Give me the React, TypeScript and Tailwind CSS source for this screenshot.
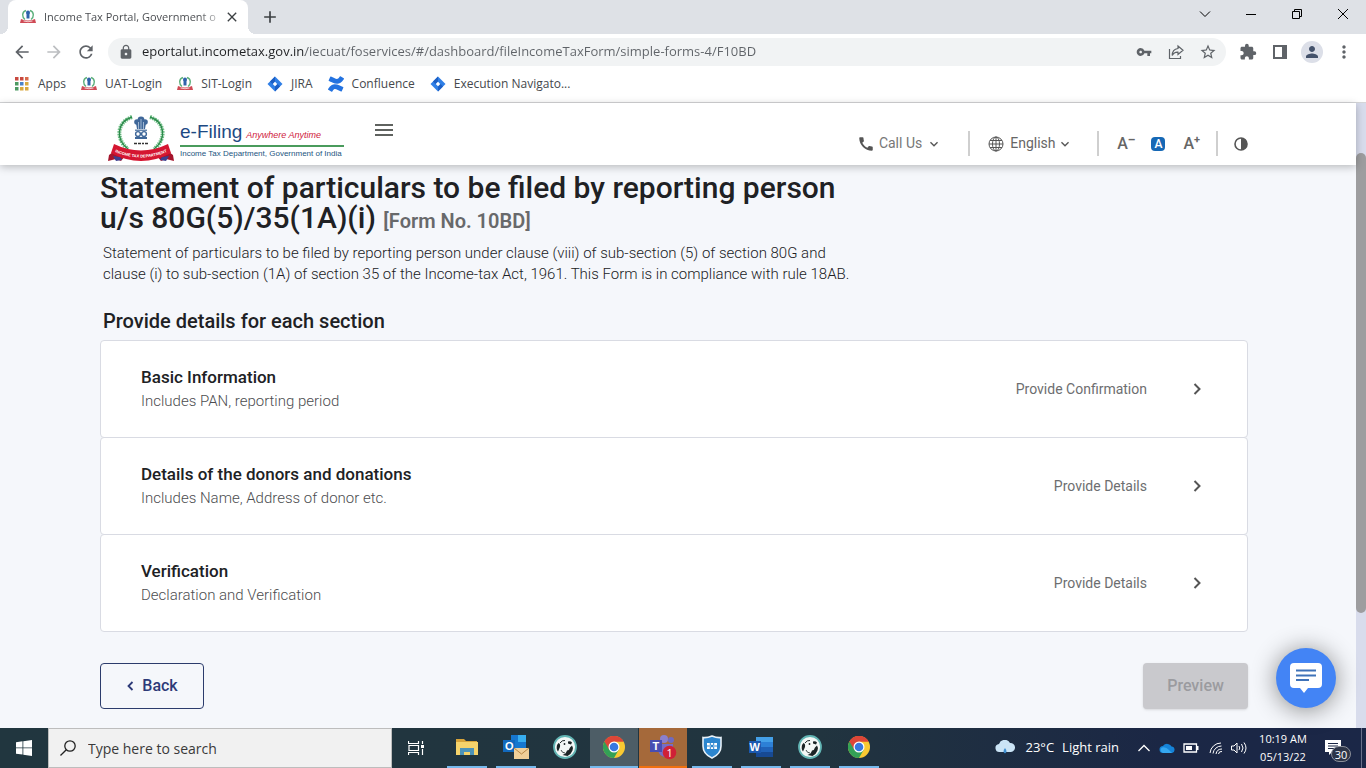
import React from "react";
import {
  MdArrowBack,
  MdArrowForward,
  MdCall,
  MdClose,
  MdExtension,
  MdKeyboardArrowDown,
  MdLock,
  MdMoreVert,
  MdPerson,
  MdRefresh,
  MdStarBorder,
  MdVpnKey,
  MdAdd,
} from "react-icons/md";
import { SiConfluence } from "react-icons/si";

const sections = [
  { title: "Basic Information", note: "Includes PAN, reporting period", status: "Provide Confirmation" },
  { title: "Details of the donors and donations", note: "Includes Name, Address of donor etc.", status: "Provide Details" },
  { title: "Verification", note: "Declaration and Verification", status: "Provide Details" },
];

function Emblem({ className }: { className: string }) {
  return (
    <svg viewBox="0 0 66 48" className={className} aria-hidden="true">
      <path d="M24 2C9 7 7 24 20 34M42 2c15 5 17 22 4 32" fill="none" stroke="#6fbf86" strokeWidth="4" strokeDasharray="1.6 .9" />
      <path d="M24 2C9 7 7 24 20 34M42 2c15 5 17 22 4 32" fill="none" stroke="#2c8a4b" strokeWidth="1.4" />
      <g fill="#3f6799">
        <circle cx="33" cy="5" r="3.4" />
        <circle cx="29" cy="7" r="2.8" />
        <circle cx="37" cy="7" r="2.8" />
        <path d="M28 8h10l-1 6h-8zM27 22h12v2H27z" />
      </g>
      <path d="M30.500 7v7M33 4v10M35.500 7v7" stroke="#c9d9ea" strokeWidth=".7" />
      <path d="M27 15.200h12" stroke="#3f6799" strokeWidth="1.200" />
      <circle cx="30" cy="19" r="2.400" fill="none" stroke="#3f6799" strokeWidth="1.400" />
      <circle cx="36" cy="19" r="2.400" fill="none" stroke="#3f6799" strokeWidth="1.400" />
      <path d="M26 28.500h3m1 0h3m1 0h2m1 0h3" stroke="#333" strokeWidth="1.500" />
      <path d="M1 40l8-6 8 7-4 5-5-2-8 2zM65 40l-8-6-8 7 4 5 5-2 8 2z" fill="#a5142c" />
      <path d="M5 41l7 1 2 3-6 1zM61 41l-7 1-2 3 6 1z" fill="#3b3f8f" />
      <path d="M6 29q27 13 54 0l3 9q-30 16-60 0z" fill="#d51631" />
      <path id="ribbon" d="M6 36.500q27 12 54 0" fill="none" />
      <text fontSize="4" fontWeight="700" fill="#fff" fontFamily="Liberation Sans, sans-serif">
        <textPath href="#ribbon" startOffset="50%" textAnchor="middle">INCOME TAX DEPARTMENT</textPath>
      </text>
    </svg>
  );
}

function MiniEmblem() {
  return (
    <svg viewBox="0 0 16 16" className="size-4 shrink-0" aria-hidden="true">
      <path d="M6 1.500C1.500 3 2 8.500 5 10.500M10 1.500c4.500 1.500 4 7 1 9" fill="none" stroke="#5db07c" strokeWidth="1.400" />
      <circle cx="8" cy="3.500" r="2" fill="#2f62ab" />
      <path d="M6.500 4h3v5.500h-3z" fill="#2f62ab" />
      <path d="M1 10q7 3 14 0l1 4H0z" fill="#cf4a55" />
      <path d="M3.500 12q4.500 1.500 9 0" fill="none" stroke="#f3c9cc" />
    </svg>
  );
}

function JiraIcon() {
  return (
    <svg viewBox="0 0 16 16" className="size-4 shrink-0" aria-hidden="true">
      <path d="M8 .5L15.500 8 8 15.500.5 8z" fill="#2f7fe6" />
      <path d="M8 .5v5L5.500 8 3 5.500z" fill="#1c5fc4" />
      <path d="M8 15.500v-5L10.500 8l2.500 2.500z" fill="#1c5fc4" />
      <path d="M8 5.800L10.200 8 8 10.200 5.800 8z" fill="#fff" />
    </svg>
  );
}

function AppsIcon() {
  const colors = ["#c8493f", "#c8493f", "#d8694a", "#4d9a62", "#4a82c9", "#d9a83e", "#4d9a62", "#d9a83e", "#d9a83e"];
  return (
    <svg viewBox="0 0 16 16" className="size-4 shrink-0" aria-hidden="true">
      {colors.map((c, i) => (
        <rect key={i} x={1 + (i % 3) * 5} y={1 + Math.floor(i / 3) * 5} width="3.500" height="3.500" fill={c} />
      ))}
    </svg>
  );
}

const bookmarks = [
  { label: "Apps", icon: <AppsIcon /> },
  { label: "UAT-Login", icon: <MiniEmblem /> },
  { label: "SIT-Login", icon: <MiniEmblem /> },
  { label: "JIRA", icon: <JiraIcon /> },
  { label: "Confluence", icon: <SiConfluence className="size-4 text-[#2372e0]" /> },
  { label: "Execution Navigato...", icon: <JiraIcon /> },
];

function Browser() {
  return (
    <div className="bg-white font-['Open_Sans','Noto_Sans',sans-serif]">
      <div className="flex h-[34px] items-start bg-[#dee1e6] pl-2">
        <div className="relative flex h-[34px] w-60 items-center rounded-t-lg bg-white pl-3 pr-2">
          <span className="absolute -left-2 bottom-0 size-2 bg-[radial-gradient(circle_at_0_0,#dee1e6_8px,#fff_8px)]" />
          <span className="absolute -right-2 bottom-0 size-2 bg-[radial-gradient(circle_at_100%_0,#dee1e6_8px,#fff_8px)]" />
          <MiniEmblem />
          <span className="ml-2 w-44 whitespace-nowrap bg-[linear-gradient(90deg,#45484c_88%,#fff_104%)] bg-clip-text text-[11px] text-transparent">
            Income Tax Portal, Government o
          </span>
          <button aria-label="Close tab" className="ml-1 text-[#3c4043]">
            <MdClose className="size-4" />
          </button>
        </div>
        <button aria-label="New tab" className="ml-3 flex h-[34px] items-center text-[#3c4043]">
          <MdAdd className="size-5" />
        </button>
        <div className="ml-auto flex h-7 text-black">
          <button aria-label="Search tabs" className="flex w-[46px] items-center justify-center">
            <svg viewBox="0 0 12 12" className="size-3" fill="none" stroke="currentColor"><path d="M1 3.500l5 5 5-5" /></svg>
          </button>
          <button aria-label="Minimize" className="flex w-[46px] items-center justify-center">
            <svg viewBox="0 0 10 10" className="size-2.5" stroke="currentColor"><path d="M0 5.500h10" /></svg>
          </button>
          <button aria-label="Restore" className="flex w-[46px] items-center justify-center">
            <svg viewBox="0 0 10 10" className="size-2.5" fill="none" stroke="currentColor"><path d="M.5 2.500h7v7h-7zM2.500 2.500v-2h7v7h-2" /></svg>
          </button>
          <button aria-label="Close" className="flex w-[46px] items-center justify-center">
            <svg viewBox="0 0 10 10" className="size-2.5" stroke="currentColor"><path d="M0 0l10 10M10 0L0 10" /></svg>
          </button>
        </div>
      </div>

      <div className="flex h-9 items-center px-1.5 text-[#5f6368]">
        <button aria-label="Back" className="flex w-8 justify-center"><MdArrowBack className="size-5" /></button>
        <button aria-label="Forward" className="flex w-8 justify-center text-[#bcbec1]"><MdArrowForward className="size-5" /></button>
        <button aria-label="Reload" className="flex w-8 justify-center"><MdRefresh className="size-5" /></button>
        <div className="ml-1.5 flex h-7 flex-1 items-center rounded-full bg-[#f1f3f4] pl-2.5 pr-0.5">
          <MdLock className="size-4" />
          <input
            aria-label="Address"
            readOnly
            value="eportalut.incometax.gov.in/iecuat/foservices/#/dashboard/fileIncomeTaxForm/simple-forms-4/F10BD"
            className="ml-2 min-w-0 flex-1 bg-[linear-gradient(90deg,#202124_163px,#5f6368_163px)] bg-clip-text text-[13px] text-transparent outline-none"
          />
          <button aria-label="Passwords" className="flex w-8 justify-center"><MdVpnKey className="size-4" /></button>
          <button aria-label="Share" className="flex w-8 justify-center">
            <svg viewBox="0 0 16 16" className="size-4" fill="none" stroke="currentColor" strokeWidth="1.200">
              <path d="M1.500 5v9.500h11V12M10 2l5 4.200-5 4.200V8.200C7.500 8 5.500 9 4.200 11.500 4.200 7.500 6.500 5 10 4.500z" />
            </svg>
          </button>
          <button aria-label="Bookmark" className="flex w-8 justify-center"><MdStarBorder className="size-[18px]" /></button>
        </div>
        <button aria-label="Extensions" className="ml-1.5 flex w-8 justify-center"><MdExtension className="size-[18px]" /></button>
        <button aria-label="Side panel" className="flex w-8 justify-center">
          <svg viewBox="0 0 14 14" className="size-3.5"><path d="M1 1h12v12H1z" fill="none" stroke="currentColor" strokeWidth="2" /><path d="M9 0h5v14H9z" fill="currentColor" /></svg>
        </button>
        <button aria-label="Profile" className="flex w-8 justify-center">
          <span className="flex size-[22px] items-center justify-center rounded-full bg-[#dcdfe8] text-[#44526b]"><MdPerson className="size-[18px]" /></span>
        </button>
        <button aria-label="Menu" className="flex w-8 justify-center"><MdMoreVert className="size-5" /></button>
      </div>

      <div className="flex h-[33px] items-center gap-[15px] border-b border-[#d5d6d8] pb-1 pl-3.5 text-[12px] text-[#45484c]">
        {bookmarks.map((b) => (
          <a key={b.label} href="#" className="flex items-center gap-2 whitespace-nowrap">
            {b.icon}
            {b.label}
          </a>
        ))}
      </div>
    </div>
  );
}

function Divider() {
  return <span className="h-[25px] w-0.5 bg-[#cfcfcf]" />;
}

function SiteHeader() {
  return (
    <header className="relative z-10 flex h-[62px] items-start bg-white pl-[108px] pr-[108px] shadow-[0_2px_8px_rgba(0,0,0,0.25)]">
      <a href="#" aria-label="e-Filing home" className="flex pt-3">
        <Emblem className="h-12 w-[66px]" />
        <span className="ml-1.5 block w-[164px] pt-1 font-['Liberation_Sans',sans-serif]">
          <span className="flex items-baseline gap-1 whitespace-nowrap border-b-2 border-[#4a9b5c]">
            <span className="text-[19px] leading-[26px] text-[#1d4983]">e-Filing</span>
            <span className="text-[9px] italic leading-4 text-[#cf2140]">Anywhere Anytime</span>
          </span>
          <span className="block whitespace-nowrap text-[8px] leading-[14px] text-[#1d5580]">
            Income Tax Department, Government of India
          </span>
        </span>
      </a>
      <button aria-label="Open navigation" className="ml-[31px] pt-[21px] text-[#5f625f]">
        <svg viewBox="0 0 18 12" className="h-3 w-[18px]" stroke="currentColor" strokeWidth="2"><path d="M0 1h18M0 6h18M0 11h18" /></svg>
      </button>

      <div className="ml-auto mt-7 flex h-[25px] items-center text-[#666]">
        <button className="flex items-center text-[14px] text-[#777]">
          <MdCall className="mr-1 size-[18px] text-[#555]" />
          Call Us
          <MdKeyboardArrowDown className="ml-1 size-4 text-[#555]" />
        </button>
        <span className="w-[26px]" />
        <Divider />
        <label className="ml-[18px] flex items-center text-[14px]">
          <svg viewBox="0 0 16 16" className="size-4" fill="none" stroke="#555">
            <circle cx="8" cy="8" r="7" />
            <ellipse cx="8" cy="8" rx="3.500" ry="7" />
            <path d="M8 1v14M1 8h14M2 4.500h12M2 11.500h12" />
          </svg>
          <select aria-label="Language" className="ml-1.5 appearance-none bg-transparent">
            <option>English</option>
          </select>
          <MdKeyboardArrowDown className="ml-px size-4 text-[#555]" />
        </label>
        <span className="w-6" />
        <Divider />
        <button aria-label="Decrease font size" className="ml-[18px] flex items-start text-[16px] font-medium leading-5">
          A<span className="text-[12px] font-bold leading-3">–</span>
        </button>
        <button aria-label="Default font size" className="ml-4 flex size-3.5 items-center justify-center rounded-sm bg-[#1668b5] text-[12px] font-medium leading-none text-white">A</button>
        <button aria-label="Increase font size" className="ml-[18px] flex items-start text-[16px] font-medium leading-5">
          A<span className="text-[11px] font-bold leading-3">+</span>
        </button>
        <span className="w-4" />
        <Divider />
        <button aria-label="Contrast" className="ml-4">
          <svg viewBox="0 0 14 14" className="size-3.5"><circle cx="7" cy="7" r="6" fill="none" stroke="#555" strokeWidth="1.600" /><path d="M7 1a6 6 0 010 12z" fill="#555" /></svg>
        </button>
      </div>
    </header>
  );
}

function FormPage() {
  return (
    <main className="pl-[100px] pr-[108px] pt-2">
      <h1 className="max-w-[750px] text-[30px] font-medium leading-[30px] text-[#202124]">
        Statement of particulars to be filed by reporting person u/s 80G(5)/35(1A)(i){" "}
        <span className="text-[20px] font-semibold leading-5 text-[#68696b]">[Form No. 10BD]</span>
      </h1>
      <p className="mt-2.5 max-w-[800px] pl-[3px] text-[15px] font-light leading-[21px] text-[#202124]">
        Statement of particulars to be filed by reporting person under clause (viii) of sub-section (5) of section 80G and
        <br />
        clause (i) to sub-section (1A) of section 35 of the Income-tax Act, 1961. This Form is in compliance with rule 18AB.
      </p>
      <h2 className="mt-6 pl-[3px] text-[20px] font-medium leading-6 text-[#202124]">Provide details for each section</h2>

      <div className="mt-[7px]">
        {sections.map((s) => (
          <button
            key={s.title}
            className="-mb-px flex w-full items-center rounded border border-[#d9dbe3] bg-white py-6 pl-10 pr-10 text-left"
          >
            <span className="flex-1">
              <span className="block text-[17px] font-medium leading-6 text-[#202124]">{s.title}</span>
              <span className="block text-[15px] font-light leading-6 text-[#4c4d50]">{s.note}</span>
            </span>
            <span className="text-[14px] leading-5 text-[#6d6e70]">{s.status}</span>
            <svg viewBox="0 0 12 12" className="ml-11 mr-1 size-3" fill="none" stroke="#555" strokeWidth="2"><path d="M3.500 1L8.500 6l-5 5" /></svg>
          </button>
        ))}
      </div>

      <div className="mt-8 flex justify-between">
        <button className="flex h-[46px] w-[104px] items-center justify-center gap-2 rounded border border-[#2c3c6c] text-[16px] font-medium text-[#2d3a78]">
          <svg viewBox="0 0 8 10" className="h-2.5 w-2" fill="none" stroke="currentColor" strokeWidth="1.800"><path d="M6.500 1L2.500 5l4 4" /></svg>
          Back
        </button>
        <button disabled className="h-[46px] w-[105px] rounded bg-[#c9c9cd] text-[16px] font-medium text-[#9b9b9f] shadow">
          Preview
        </button>
      </div>
    </main>
  );
}

function ChromeIcon() {
  return (
    <svg viewBox="0 0 24 24" className="size-[22px]" aria-hidden="true">
      <circle cx="12" cy="12" r="12" fill="#f9c932" />
      <path d="M12 12L1.600 6A12 12 0 0122.400 6H12z" fill="#dd4638" />
      <path d="M12 12L1.600 6A12 12 0 0012 24l5.200-9z" fill="#33a156" />
      <path d="M12 6h10.400A12 12 0 001.600 6l5.200 9z" fill="#dd4638" />
      <circle cx="12" cy="12" r="6" fill="#fff" />
      <circle cx="12" cy="12" r="4.700" fill="#3878e0" />
    </svg>
  );
}

function DogIcon() {
  return (
    <svg viewBox="0 0 24 24" className="size-6" aria-hidden="true">
      <circle cx="12" cy="12" r="11" fill="#f4f8f7" stroke="#62b5b4" strokeWidth="1.800" />
      <path d="M5.500 8q2 .5 1.500 4l-2 4.500Q3 14 4 10z" fill="#1c2426" />
      <path d="M15 6.500q2.500-1 4 1l-1 2-3-1z" fill="#1c2426" />
      <path d="M19 10.500q1.500 2 .5 5-1.500 4-5 5.500l-5-1q3.500-1 4.500-4.500 2.500-.500 3-3z" fill="#1c2426" />
      <path d="M7 8q2-3 5-2.500" fill="none" stroke="#1c2426" strokeWidth="1" />
      <circle cx="11.500" cy="9" r=".9" fill="#1c2426" />
      <path d="M8 15q1 3 4 3" fill="none" stroke="#1c2426" strokeWidth=".8" />
    </svg>
  );
}

function FolderIcon() {
  return (
    <svg viewBox="0 0 24 22" className="h-[22px] w-6" aria-hidden="true">
      <path d="M1 3h8l2 2h11v4H1z" fill="#d8a43a" />
      <path d="M1 6h22v13H1z" fill="#f6d36b" />
      <path d="M5 19v-7h14v7h-4v-3H9v3z" fill="#4d93b8" />
    </svg>
  );
}

function OutlookIcon() {
  return (
    <svg viewBox="0 0 28 26" className="h-[26px] w-7" aria-hidden="true">
      <path d="M9 1h15v15H9z" fill="#1677cf" />
      <path d="M16 1h8v7h-8z" fill="#37aef0" />
      <path d="M1 6h12v12H1z" fill="#1269bd" />
      <text x="3" y="16" fontSize="11" fontWeight="700" fill="#fff" fontFamily="Liberation Sans, sans-serif">O</text>
      <path d="M12 14h15v11H12z" fill="#f0cf98" />
      <path d="M12 14l7.500 6 7.500-6" fill="none" stroke="#b98846" />
    </svg>
  );
}

function TeamsIcon() {
  return (
    <svg viewBox="0 0 28 26" className="h-[26px] w-7" aria-hidden="true">
      <circle cx="15" cy="5" r="4" fill="#8a80cf" />
      <circle cx="22" cy="6" r="3" fill="#6f6ac0" />
      <path d="M9 10h15v7q-2 6-8 6-6-1-7-7z" fill="#756dc6" />
      <path d="M1 6h12v12H1z" fill="#474db2" />
      <text x="3.500" y="16" fontSize="11" fontWeight="700" fill="#fff" fontFamily="Liberation Sans, sans-serif">T</text>
      <circle cx="20.500" cy="18.500" r="6.800" fill="#cf2036" />
      <text x="17.500" y="22.500" fontSize="11" fill="#fff" fontFamily="Open Sans, sans-serif">1</text>
    </svg>
  );
}

function ShieldIcon() {
  return (
    <svg viewBox="0 0 20 24" className="h-6 w-5" aria-hidden="true">
      <path d="M10 1q5 2 9 1.500V11q0 8-9 12Q1 19 1 11V2.500Q5 3 10 1z" fill="#2c86cf" stroke="#e8f1f8" strokeWidth="1.600" />
      <path d="M5 8h10v6H5z" fill="#fff" />
      <path d="M5 11h10M8.300 8v2M11.700 8v2M8.300 12v2M11.700 12v2" fill="none" stroke="#2c86cf" strokeWidth="1" />
      <path d="M8.800 9.800h2.400v2.400H8.800z" fill="#2c86cf" />
    </svg>
  );
}

function WordIcon() {
  return (
    <svg viewBox="0 0 26 22" className="h-[22px] w-[26px]" aria-hidden="true">
      <path d="M8 1h17v5H8z" fill="#44a0e8" />
      <path d="M8 6h17v5H8z" fill="#2d80d6" />
      <path d="M8 11h17v5H8z" fill="#2062b8" />
      <path d="M8 16h17v5H8z" fill="#174a94" />
      <path d="M1 5h12v12H1z" fill="#1b59b0" />
      <text x="1.500" y="15" fontSize="11" fontWeight="700" fill="#fff" fontFamily="Liberation Sans, sans-serif">W</text>
    </svg>
  );
}

const tasks = [
  { name: "File Explorer", icon: <FolderIcon />, className: "border-[#76b9ed]" },
  { name: "Outlook", icon: <OutlookIcon />, className: "border-[#76b9ed]" },
  { name: "DBeaver", icon: <DogIcon />, className: "border-transparent" },
  { name: "Chrome", icon: <ChromeIcon />, className: "border-[#76b9ed]", tile: "bg-[#4d5d66]" },
  { name: "Teams", icon: <TeamsIcon />, className: "border-[#f0700f]", tile: "bg-[#a5693a]" },
  { name: "FortiClient", icon: <ShieldIcon />, className: "border-[#76b9ed]" },
  { name: "Word", icon: <WordIcon />, className: "border-[#76b9ed]" },
  { name: "DBeaver 2", icon: <DogIcon />, className: "border-[#76b9ed]" },
  { name: "Chrome 2", icon: <ChromeIcon />, className: "border-[#76b9ed]" },
];

function Taskbar() {
  return (
    <footer className="flex h-10 items-stretch bg-[linear-gradient(90deg,#21363f_0%,#21343f_60%,#1b2745_85%,#1b2747_100%)] font-['Open_Sans','Noto_Sans',sans-serif] text-white">
      <button aria-label="Start" className="flex w-12 items-center justify-center">
        <svg viewBox="0 0 16 16" className="size-4" fill="#fff"><path d="M0 2.200L6.500 1.300v6.200H0zM7.300 1.200L16 0v7.500H7.300zM0 8.300h6.500v6.300L0 13.700zM7.300 8.300H16V16l-8.700-1.200z" /></svg>
      </button>
      <label className="flex w-[344px] items-center border border-[#bdbdbd] bg-[#f1f1f1] pl-[11px]">
        <svg viewBox="0 0 16 16" className="size-4" fill="none" stroke="#222" strokeWidth="1.300"><circle cx="10" cy="6" r="5.200" /><path d="M6.300 9.700L.5 15.500" /></svg>
        <input
          aria-label="Search"
          placeholder="Type here to search"
          className="ml-3 min-w-0 flex-1 bg-transparent text-[14px] outline-none placeholder:text-[#3a3a3a]"
        />
      </label>
      <button aria-label="Task view" className="flex w-12 items-center justify-center">
        <svg viewBox="0 0 16 16" className="size-4" fill="none" stroke="#fff" strokeWidth="1.200"><path d="M.5 1v2.500h10V1M.5 15v-2.500h10V15M1 5.500h9.500v5H1zM14.500 1v3M14.500 9v6" /><path d="M13 5h3v3h-3z" fill="#fff" stroke="none" /></svg>
      </button>
      <div className="ml-[3px] flex gap-px">
        {tasks.map((t) => (
          <button key={t.name} aria-label={t.name} className={`flex w-12 flex-col items-center ${t.tile ?? ""}`}>
            <span className={`flex h-10 items-center justify-center border-b-2 ${t.className} ${t.tile ? "w-12" : "w-10"}`}>{t.icon}</span>
          </button>
        ))}
      </div>
      <div className="ml-auto flex items-center text-[13px]">
        <button className="flex items-center whitespace-nowrap">
          <svg viewBox="0 0 20 16" className="mr-2.5 h-4 w-5"><path d="M5 12a4 4 0 01-1-8 6 6 0 0111-1 4.500 4.500 0 011 9z" fill="#cbe4f6" /><path d="M10 8q3 4 0 5.500Q7 12 10 8z" fill="#3f8fd0" /></svg>
          <span className="mr-2">23°C</span>
          <span>Light rain</span>
        </button>
        <button aria-label="Show hidden icons" className="ml-[18px]">
          <svg viewBox="0 0 14 10" className="h-2.5 w-3.5" fill="none" stroke="#fff" strokeWidth="1.300"><path d="M1.500 8L7 2.500 12.500 8" /></svg>
        </button>
        <svg viewBox="0 0 16 12" className="ml-2 h-3 w-4"><path d="M4 11a3.500 3.500 0 010-7 5 5 0 018.500.5A3.300 3.300 0 0113 11z" fill="#1583d8" /><path d="M3 5.500q4-1 7 2.500l3 3H4a3 3 0 01-1-5.500z" fill="#35a7f0" /></svg>
        <svg viewBox="0 0 16 10" className="ml-2 h-2.5 w-4"><path d="M1 1h12.500v8H1z" fill="none" stroke="#fff" strokeWidth="1.300" /><path d="M3 3h6v4H3zM14 3h1.500v4H14z" fill="#fff" /></svg>
        <svg viewBox="0 0 14 14" className="ml-2.5 size-3.5" fill="none" stroke="#fff"><path d="M1 12A11 11 0 0112 2M4 12.500A8.500 8.500 0 0112.500 5M7 13a6 6 0 016-5M9.500 13a3 3 0 013.500-2.500" /></svg>
        <svg viewBox="0 0 16 14" className="ml-2 h-3.5 w-4" fill="none" stroke="#fff"><path d="M.5 5h2.500l3-3v10L3 9H.5zM8 5q1.500 2 0 4M10.500 3q3 4 0 8M13 1.500q4 5.500 0 11" /></svg>
        <button className="ml-2.5 w-[52px] whitespace-nowrap text-center text-[11px] leading-[18px]">
          10:19 AM
          <br />
          05/13/22
        </button>
        <button aria-label="Notifications" className="relative ml-4 h-10 w-8">
          <svg viewBox="0 0 16 16" className="size-4"><path d="M0 0h16v12H7l-3 3v-3H0z" fill="#fff" /><path d="M3 3.500h10M3 6h10M3 8.500h6" stroke="#1b2745" /></svg>
          <span className="absolute bottom-1.5 left-1.5 flex h-4 w-5 items-center justify-center rounded-full border border-[#8b8f99] bg-[#2d3548] text-[11px] leading-none">30</span>
        </button>
        <span className="ml-1 mr-1 h-10 w-px bg-[#69708a]" />
      </div>
    </footer>
  );
}

export default function App() {
  return (
    <div className="flex min-h-screen flex-col bg-[#f5f7fb]">
      <Browser />
      <div className="relative flex flex-1 font-[Roboto,sans-serif]">
        <div className="min-w-0 flex-1 pb-4">
          <SiteHeader />
          <FormPage />
        </div>
        <div className="flex w-2.5 flex-col bg-[#d8dcec] pt-[50px]">
          <div className="h-4/5 rounded-full bg-[#9d9d9f]" />
        </div>
        <button
          aria-label="Chat"
          className="absolute bottom-5 right-[30px] flex size-[60px] items-center justify-center rounded-full bg-[#4384f5] shadow-[0_2px_24px_rgba(0,0,0,0.45)]"
        >
          <svg viewBox="0 0 32 30" className="h-[30px] w-8"><path d="M4 0h24q4 0 4 4v17q0 4-4 4H18l-4 5-4-5H4q-4 0-4-4V4q0-4 4-4z" fill="#fff" /><path d="M6 7.500h20M6 12.500h20M6 17h13" stroke="#3f72b8" strokeWidth="1.800" /></svg>
        </button>
      </div>
      <Taskbar />
    </div>
  );
}
